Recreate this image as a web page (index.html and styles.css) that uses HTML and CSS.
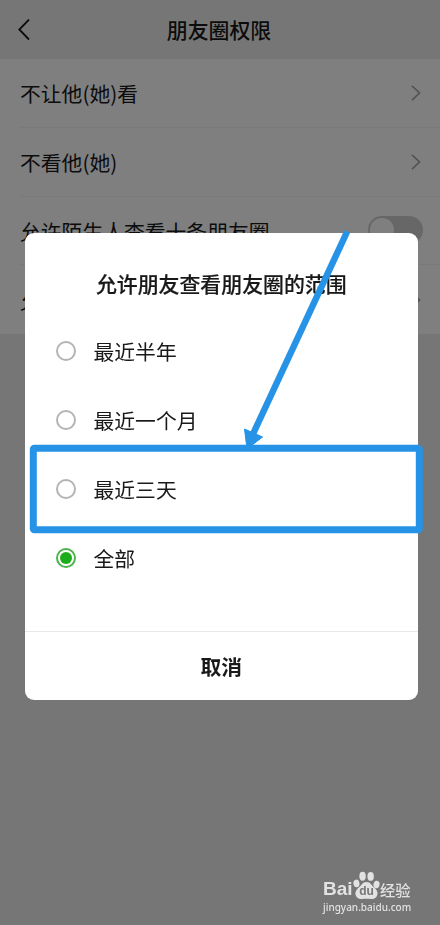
FILE: index.html
```html
<!DOCTYPE html>
<html lang="zh-CN">
<head>
    <meta charset="UTF-8">
    <meta name="viewport" content="width=device-width, initial-scale=1.0">
    <title>朋友圈权限</title>
    <link rel="stylesheet" href="styles.css">
</head>
<body>
    <div class="screen">
        <header class="navbar">
            <svg class="back" width="14" height="22" viewBox="0 0 14 22"><path d="M12 0.5 L2.3 10.5 L12 20.5"/></svg>
            <h1>朋友圈权限</h1>
        </header>

        <div class="list">
            <div class="row">
                <span>不让他(她)看</span>
                <svg class="arrow" width="10" height="16" viewBox="0 0 10 16"><path d="M1 .8 L8.5 8 L1 15.2"/></svg>
            </div>
            <div class="row">
                <span>不看他(她)</span>
                <svg class="arrow" width="10" height="16" viewBox="0 0 10 16"><path d="M1 .8 L8.5 8 L1 15.2"/></svg>
            </div>
            <div class="row">
                <span>允许陌生人查看十条朋友圈</span>
                <div class="switch"></div>
            </div>
            <div class="row">
                <span>允许朋友查看朋友圈的范围</span>
                <svg class="arrow" width="10" height="16" viewBox="0 0 10 16"><path d="M1 .8 L8.5 8 L1 15.2"/></svg>
            </div>
        </div>
    </div>

    <div class="mask">
        <div class="dialog">
            <h2>允许朋友查看朋友圈的范围</h2>
            <div class="options">
                <div class="option"><i class="radio"></i><span>最近半年</span></div>
                <div class="option"><i class="radio"></i><span>最近一个月</span></div>
                <div class="option"><i class="radio"></i><span>最近三天</span></div>
                <div class="option"><i class="radio checked"></i><span>全部</span></div>
            </div>
            <div class="cancel">取消</div>
        </div>
    </div>

    <!-- arrow and frame over the dialog -->
    <svg class="marker" width="440" height="925" viewBox="0 0 440 925">
        <rect x="33.3" y="448.2" width="386" height="81.5" rx="1"/>
        <path class="line" d="M347.2 231.5 L253 434"/>
        <path class="head" d="M244.5 429 L262.6 437 L247 449 Z"/>
    </svg>

    <div class="watermark">
        <div class="logo">
            <span class="bai">Bai</span>
            <span class="paw">
                <svg width="27" height="29" viewBox="0 0 26 28">
                    <ellipse cx="3.3" cy="12" rx="2.9" ry="3.7" transform="rotate(-12 3.3 12)"/>
                    <ellipse cx="9.2" cy="5" rx="3.1" ry="4.3"/>
                    <ellipse cx="17" cy="5.2" rx="3.1" ry="4.3"/>
                    <ellipse cx="22.7" cy="13" rx="2.9" ry="3.7" transform="rotate(12 22.7 13)"/>
                    <path d="M13 10.5 C17 10.5 17.5 13.5 20.5 16 C24 19 24.5 22.5 22.5 25 C20 28 16.5 26.9 13 26.9 C9.5 26.9 6 28 3.5 25 C1.5 22.5 2 19 5.5 16 C8.5 13.5 9 10.5 13 10.5 Z"/>
                </svg>
                <b>du</b>
            </span>
            <span class="jy">经验</span>
        </div>
        <div class="site">jingyan.baidu.com</div>
    </div>
</body>
</html>
```

FILE: styles.css
```css
* {
    box-sizing: border-box;
}
body {
    margin: 0;
    font-family: "Noto Sans CJK SC", sans-serif;
    font-size: 20.8px;
    color: #191919;
    background: #ededed;
    overflow: hidden;
}
h1, h2 {
    margin: 0;
    font-size: 20.9px;
    font-weight: 500;
}
h2 {
    -webkit-text-stroke: 0.2px #191919;
}
.screen {
    height: 925px;
}
.navbar {
    display: flex;
    align-items: center;
    height: 59px;
    padding: 0 17px;
}
.navbar h1 {
    flex: 1;
    text-align: center;
    padding-right: 16px;
    padding-bottom: 1px;
}
.back {
    fill: none;
    stroke: #191919;
    stroke-width: 1.8;
}
.list {
    background: #fff;
}
.row {
    display: flex;
    align-items: center;
    justify-content: space-between;
    height: 68.75px;
    margin-left: 20px;
    padding-right: 19px;
    border-bottom: 1px solid #f3f3f3;
}
.row:last-child {
    border-bottom: none;
}
.row span {
    padding-top: 1px;
}
.arrow {
    fill: none;
    stroke: #a6a6a6;
    stroke-width: 1.7;
}
.switch {
    width: 55px;
    height: 28px;
    margin-right: -2px;
    border-radius: 14px;
    background: #cfcfcf;
    padding: 2px;
}
.switch::before {
    content: "";
    display: block;
    width: 24px;
    height: 24px;
    border-radius: 50%;
    background: #fff;
}
.mask {
    position: fixed;
    inset: 0;
    display: flex;
    align-items: flex-start;
    padding: 233px 22px 0 24.5px;
    background: rgba(0,0,0,0.5);
}
.dialog {
    flex: 1;
    height: 467px;
    border-radius: 9px;
    background: #fff;
    overflow: hidden;
}
.dialog h2 {
    height: 83px;
    padding-top: 34px;
    line-height: 32px;
    text-align: center;
}
.options {
    height: 315px;
}
.option {
    display: flex;
    align-items: center;
    gap: 17.5px;
    height: 69px;
    padding-left: 31.5px;
}
.radio {
    flex: none;
    width: 20px;
    height: 20px;
    border: 2px solid #b4b4b4;
    border-radius: 50%;
}
.radio.checked {
    border-color: #4db34c;
    background: #1aad19;
    background-clip: content-box;
    padding: 2px;
}
.cancel {
    height: 69px;
    border-top: 1px solid #e8e8e8;
    line-height: 68px;
    text-align: center;
    font-weight: 700;
}
.marker {
    position: absolute;
    left: 0;
    top: 0;
    fill: none;
    stroke: #2793e6;
    stroke-width: 7;
    stroke-linejoin: round;
}
.marker .line {
    stroke-width: 6.5;
}
.marker .head {
    fill: #2793e6;
    stroke-width: 1;
}
.watermark {
    position: absolute;
    left: 323px;
    top: 870px;
    color: #e2e2e2;
}
.logo {
    display: flex;
    align-items: flex-end;
    height: 30px;
}
.bai {
    width: 30px;
    font: bold 19px/22px "Liberation Sans", sans-serif;
}
.paw {
    position: relative;
    width: 27px;
    height: 29px;
}
.paw svg {
    display: block;
    fill: #e2e2e2;
}
.paw b {
    position: absolute;
    left: 0;
    top: 14px;
    width: 27px;
    text-align: center;
    font: bold 12px/13px "Liberation Sans", sans-serif;
    color: #767676;
}
.jy {
    font-size: 15.3px;
    line-height: 22px;
    font-weight: 500;
}
.site {
    font: 500 10px/15px "Noto Sans", sans-serif;
    white-space: nowrap;
}
```
